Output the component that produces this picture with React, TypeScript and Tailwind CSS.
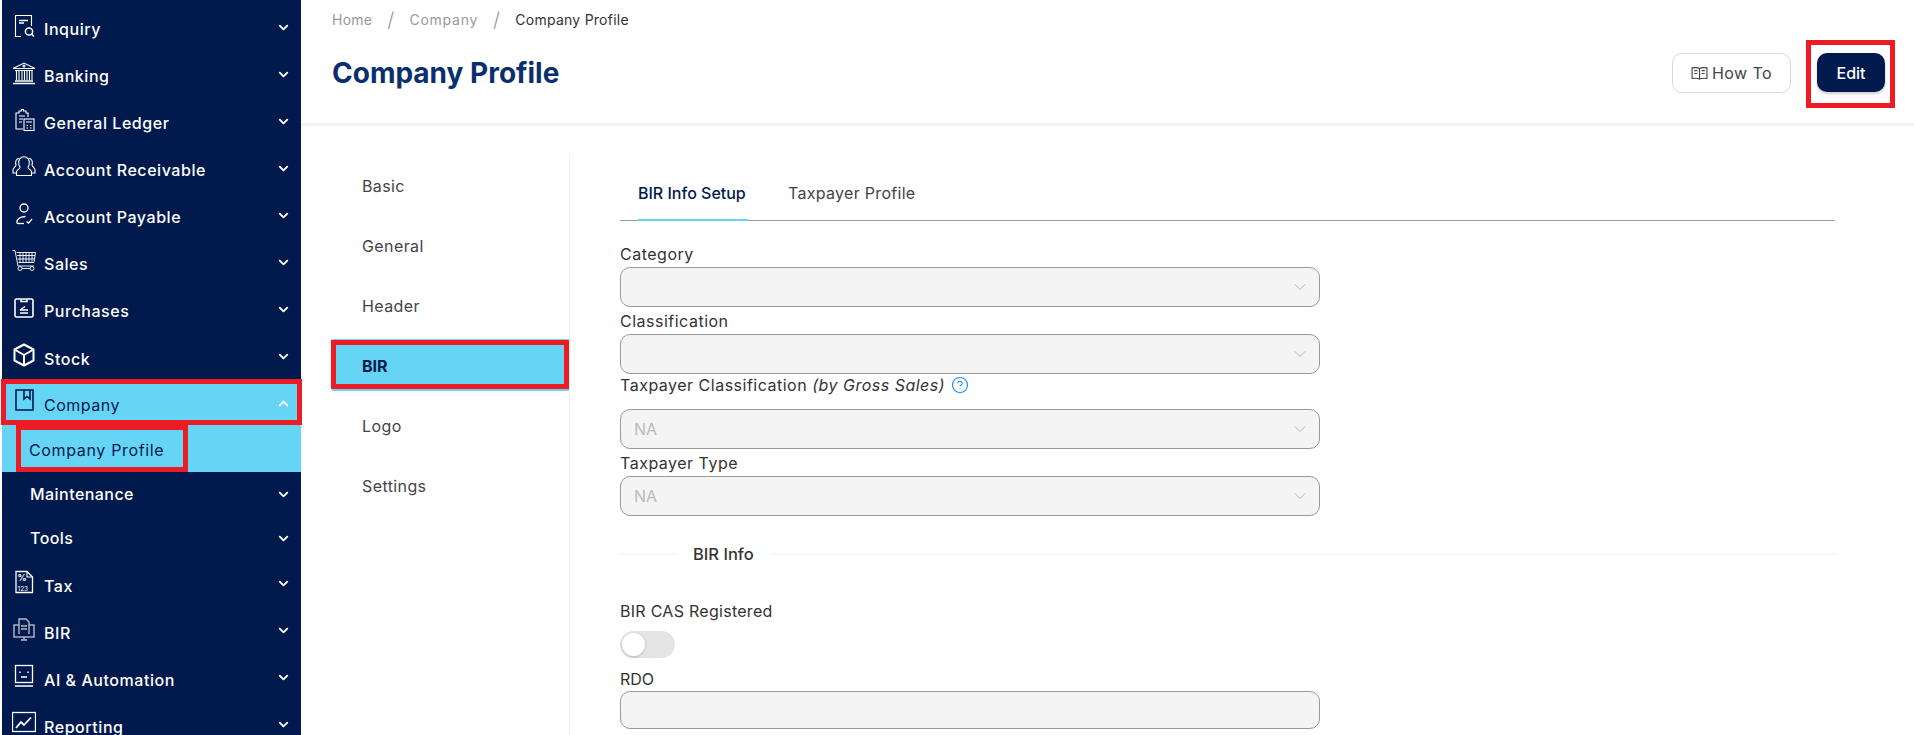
import { ChevronDown, ChevronUp, CircleHelp } from 'lucide-react'
import type { ReactNode } from 'react'

const ic = 'mb-[6px] h-6 w-6 shrink-0 fill-none stroke-current stroke-[1.1]'

const InquiryIcon = () => (
  <svg viewBox="0 0 24 24" className={ic}>
    <path d="M9 22.5H3.5V1.5H19.5V12" />
    <path d="M7 6.5H16M7 9H12" strokeWidth="1.5" />
    <circle cx="17" cy="17.5" r="3.6" strokeWidth="1.5" />
    <path d="M19.7 20.2L22 22.5" strokeWidth="1.5" />
  </svg>
)
const BankIcon = () => (
  <svg viewBox="0 0 24 24" className={ic}>
    <path d="M1 7.5L12 2L23 7.5H1Z" />
    <circle cx="12" cy="5" r="1" />
    <path d="M3 9.5H21M4.5 10V19M7 10V19M10 10V19M12.5 10V19M15 10V19M17.5 10V19M20 10V19" />
    <path d="M3 20H21M1 22.5H23" strokeWidth="1.5" />
  </svg>
)
const LedgerIcon = () => (
  <svg viewBox="0 0 24 24" className={ic}>
    <path d="M11 21H4V5H7V3H9.5V1.5H11.5V3H14V5H16V9" />
    <path d="M7 8H13M7 11H11M7 14H10" />
    <rect x="12" y="11" width="10" height="11.5" />
    <path d="M14 14H20M14.5 17.5H16M18 17.5H19.5M14.5 20H16M18 20H19.5" />
  </svg>
)
const ReceivableIcon = () => (
  <svg viewBox="0 0 24 24" className={ic}>
    <path d="M8 12C6 10 6 4 9.5 2.5C10.5 1.5 13.5 1.5 14.5 2.5C18 4 18 10 16 12C15.5 14 19 14.5 19.5 16.5V20.5H4.5V16.5C5 14.5 8.5 14 8 12Z" />
    <path d="M7 3.5C4 3.5 3 7 4 10C4 12 1 12.5 1 15V18H4.5" />
    <path d="M17 3.5C20 3.5 21 7 20 10C20 12 23 12.5 23 15V18H19.5" />
  </svg>
)
const PayableIcon = () => (
  <svg viewBox="0 0 24 24" className={ic}>
    <circle cx="12" cy="6" r="4" strokeWidth="1.3" />
    <path d="M5 21.5V20C5 16.5 9 14.5 13.5 14.5" strokeWidth="1.3" />
    <path d="M5 21.5H12" strokeWidth="1.3" />
    <path d="M14.5 19.5L16.5 21L20 17" strokeWidth="1.3" />
  </svg>
)
const CartIcon = () => (
  <svg viewBox="0 0 24 24" className={ic} style={{ strokeWidth: 0.9 }}>
    <path d="M0.5 1.5H3L6 17H22" />
    <path d="M4.5 3.5H23.5L22 13.5H6.5M8 3.5V13.5M11 3.5V13.5M14 3.5V13.5M17 3.5V13.5M20 3.5V13.5M5 6.5H23M5.5 10H22.5" />
    <circle cx="8" cy="19.5" r="2" />
    <circle cx="20" cy="19.5" r="2" />
    <path d="M10 19.5H18" />
  </svg>
)
const PurchasesIcon = () => (
  <svg viewBox="0 0 24 24" className={ic}>
    <rect x="3" y="3" width="18" height="18" rx="1.5" strokeWidth="1.6" />
    <path d="M9 3V5.5H15V3" strokeWidth="1.4" />
    <path d="M8 17H16M8 14H16M8 14L13 10.5" strokeWidth="1.4" />
  </svg>
)
const StockIcon = () => (
  <svg viewBox="0 0 24 24" className={ic} style={{ strokeWidth: 2, strokeLinejoin: 'round' }}>
    <path d="M12 1.5L21.5 6.5V17.5L12 22.5L2.5 17.5V6.5L12 1.5Z" />
    <path d="M2.5 6.5L12 12L21.5 6.5M12 12V22.5" />
  </svg>
)
const CompanyIcon = () => (
  <svg viewBox="0 0 24 24" className={ic} style={{ strokeWidth: 1.6 }}>
    <path d="M4 2H21V22H4V2Z" />
    <path d="M12 2V11L15 8.5L18 11V2" />
  </svg>
)
const TaxIcon = () => (
  <svg viewBox="0 0 24 24" className={ic}>
    <path d="M4 1.5H15L20.5 7V22.5H4V1.5Z" strokeWidth="1.3" />
    <path d="M15 1.5V7H20.5" />
    <text x="5.5" y="11" fontSize="9" fontWeight="700" fill="currentColor" stroke="none" fontFamily="Inter, sans-serif">%</text>
    <text x="5.5" y="20.5" fontSize="6.5" fill="currentColor" stroke="none" fontFamily="Inter, sans-serif">123</text>
  </svg>
)
const BirIcon = () => (
  <svg viewBox="0 0 24 24" className={ic} opacity="0.7">
    <rect x="2" y="8" width="20" height="12" strokeWidth="1.4" />
    <path d="M9 23H15M12 20V23" strokeWidth="1.4" />
    <path d="M7 17V2H14L17 5V17" fill="#001a4e" strokeWidth="1.4" />
    <path d="M9 9H15M9 12H15" strokeWidth="1.4" />
  </svg>
)
const AiIcon = () => (
  <svg viewBox="0 0 24 24" className={ic}>
    <rect x="3.5" y="1.5" width="17" height="17" strokeWidth="1.3" />
    <path d="M8 7.5V9M16 7.5V9M9 13H15M3 22H21" strokeWidth="1.4" />
  </svg>
)
const ReportingIcon = () => (
  <svg viewBox="0 0 24 24" className={ic}>
    <rect x="0.5" y="1.5" width="23" height="19" strokeWidth="1.3" />
    <path d="M4 17L9 11L12 14L19 6.5" strokeWidth="1.8" />
  </svg>
)

function RedBox({ className }: { className: string }) {
  return <span className={`pointer-events-none absolute border-[5px] border-[#ed1c24] ${className}`} />
}

function MenuRow({ icon, label, low = false }: { icon: ReactNode; label: string; low?: boolean }) {
  return (
    <div className="flex h-[47px] items-center pl-[10px] pr-[10px] text-white">
      <span className="flex w-[24px] shrink-0 justify-center">{icon}</span>
      <span className={`ml-[8px] flex-1 text-[16px] font-medium tracking-[0.55px] ${low ? 'pt-[2px]' : ''}`}>{label}</span>
      <ChevronDown className="mb-[3px] h-[15px] w-[15px]" strokeWidth={3} />
    </div>
  )
}

function SubRow({ label, className = 'h-[44px]' }: { label: string; className?: string }) {
  return (
    <div className={`flex items-center pl-[28px] pr-[10px] text-white ${className}`}>
      <span className="flex-1 text-[16px] font-medium tracking-[0.45px]">{label}</span>
      <ChevronDown className="h-[15px] w-[15px]" strokeWidth={3} />
    </div>
  )
}

function Sidebar() {
  return (
    <aside className="ml-[2px] w-[299px] shrink-0 bg-[#001a4e] pt-[5px]">
      <MenuRow icon={<InquiryIcon />} label="Inquiry" />
      <MenuRow icon={<BankIcon />} label="Banking" />
      <MenuRow icon={<LedgerIcon />} label="General Ledger" />
      <MenuRow icon={<ReceivableIcon />} label="Account Receivable" />
      <MenuRow icon={<PayableIcon />} label="Account Payable" />
      <MenuRow icon={<CartIcon />} label="Sales" />
      <MenuRow icon={<PurchasesIcon />} label="Purchases" />
      <MenuRow icon={<StockIcon />} label="Stock" low />
      <div className="relative flex h-[44px] items-center bg-[#66d5f5] pl-[10px] pr-[10px] text-[#001a4e]">
        <span className="flex w-[24px] shrink-0 justify-center">
          <CompanyIcon />
        </span>
        <span className="ml-[8px] flex-1 pt-[3px] text-[16px] tracking-[0.5px]">Company</span>
        <ChevronUp className="h-[15px] w-[15px] text-white" strokeWidth={3} />
        <RedBox className="-left-px -right-px -top-[2px] bottom-0" />
      </div>
      <div className="relative flex h-[47px] items-center bg-[#66d5f5] pl-[27px] pt-[3px] text-[16px] tracking-[0.65px] text-[#001a4e]">
        Company Profile
        <RedBox className="bottom-0 left-[14px] top-0 w-[172px]" />
      </div>
      <SubRow label="Maintenance" />
      <SubRow label="Tools" className="h-[45px] pb-[1px]" />
      <MenuRow icon={<TaxIcon />} label="Tax" low />
      <MenuRow icon={<BirIcon />} label="BIR" low />
      <MenuRow icon={<AiIcon />} label="AI & Automation" low />
      <MenuRow icon={<ReportingIcon />} label="Reporting" low />
    </aside>
  )
}

function SelectBox({ value }: { value?: string }) {
  return (
    <div className="flex h-[40px] w-[700px] items-center justify-between rounded-[10px] border border-[#999] bg-[#f4f4f4] pl-[13px] pr-[9px]">
      <span className="text-[16px] text-[#bbb]">{value}</span>
      <ChevronDown className="h-5 w-5 text-[#aaa]" strokeWidth={1} />
    </div>
  )
}

function Field({ label, value }: { label: string; value?: string }) {
  return (
    <div>
      <div className="flex h-[27px] items-center text-[16px] tracking-[0.5px] text-[#333]">{label}</div>
      <SelectBox value={value} />
    </div>
  )
}

function FormPanel() {
  return (
    <div className="ml-[50px] w-[1215px]">
      <div className="flex h-[66px] gap-[40px] border-b border-[#999] pl-[18px]">
        <div className="relative flex h-[66px] w-[110px] items-center whitespace-nowrap pt-[10px] text-[16px] font-medium text-[#001a4e]">
          BIR Info Setup
          <span className="absolute inset-x-0 bottom-0 h-[2px] bg-[#66d5f5]" />
        </div>
        <div className="flex h-[66px] items-center pt-[10px] text-[16px] tracking-[0.3px] text-[#444]">Taxpayer Profile</div>
      </div>
      <div className="pt-[19px]">
        <Field label="Category" />
        <Field label="Classification" />
        <div>
          <div className="flex h-[35px] items-start text-[16px] tracking-[0.5px] text-[#333]">
            <span className="-mt-[1px] flex h-[24px] items-center gap-[4px]">
              <span>
                Taxpayer Classification <em>(by Gross Sales)</em>
              </span>
              <CircleHelp className="ml-[2px] h-[18px] w-[18px] text-[#1a8cff]" strokeWidth={1.5} />
            </span>
          </div>
          <SelectBox value="NA" />
        </div>
        <Field label="Taxpayer Type" value="NA" />
        <div className="mt-[26px] flex h-[24px] items-center">
          <span className="h-px w-[55px] bg-[#f3f3f3]" />
          <span className="px-[18px] text-[16.5px] font-medium text-[#333]">BIR Info</span>
          <span className="h-px flex-1 bg-[#f3f3f3]" />
        </div>
        <div className="mt-[33px] flex h-[24px] items-center text-[16px] tracking-[0.28px] text-[#333]">BIR CAS Registered</div>
        <div className="relative mt-[8px] h-[27px] w-[55px] rounded-full bg-[#e4e4e4]">
          <span className="absolute left-[2px] top-[2px] h-[23px] w-[23px] rounded-full bg-white shadow-[0_1px_3px_rgba(0,0,0,0.2)]" />
        </div>
        <div className="mt-[8px] flex h-[25px] items-center text-[16px] text-[#333]">RDO</div>
        <div className="h-[38px] w-[700px] rounded-[10px] border border-[#999] bg-[#f4f4f4]" />
      </div>
    </div>
  )
}

const tabs = ['Basic', 'General', 'Header', 'BIR', 'Logo', 'Settings']

export default function App() {
  return (
    <div className="flex h-[735px] overflow-hidden bg-white font-['Inter',sans-serif]">
      <Sidebar />
      <main className="flex-1">
        <header className="flex h-[126px] items-start justify-between border-b-[3px] border-[#f3f3f3] pl-[31px] pr-[29px]">
          <div>
            <nav className="flex h-[39px] items-center text-[14px] tracking-[0.25px] text-[#999]">
              <span>Home</span>
              <span className="mx-[15px] text-[20px] font-light">/</span>
              <span className="tracking-[0.75px]">Company</span>
              <span className="mx-[15px] text-[20px] font-light">/</span>
              <span className="text-[#333]">Company Profile</span>
            </nav>
            <h1 className="mt-[17px] text-[28px] font-bold leading-[34px] text-[#0a2f6e]">Company Profile</h1>
          </div>
          <div className="mt-[53px] flex items-start gap-[26px]">
            <button className="flex h-[40px] w-[119px] items-center justify-center gap-[4px] rounded-[10px] border border-[#d9d9d9] text-[16px] tracking-[0.4px] text-[#444]">
              <svg viewBox="0 0 24 24" className="h-[17px] w-[17px] fill-none stroke-current stroke-[1.6]">
                <path d="M12 5C10 3.5 5 3.5 1.5 4V19C5 18.5 10 18.5 12 20C14 18.5 19 18.5 22.5 19V4C19 3.5 14 3.5 12 5ZM12 5V20" />
                <path d="M4.5 8H9M4.5 12H9M15 8H19.5M15 12H19.5" />
              </svg>
              How To
            </button>
            <button className="relative h-[39px] w-[68px] rounded-[10px] bg-[#001a4e] text-[16px] font-medium text-white shadow-[0_2px_3px_rgba(0,0,0,0.2)]">
              Edit
              <RedBox className="-bottom-[16px] -left-[11px] -right-[10px] -top-[13px]" />
            </button>
          </div>
        </header>
        <div className="flex h-[609px] pl-[31px] pt-[29px]">
          <div className="w-[238px] shrink-0 border-r border-[#eee] pt-[4px]">
            <div className="flex flex-col gap-[8px]">
              {tabs.map((tab) =>
                tab === 'BIR' ? (
                  <div key={tab} className="relative flex h-[52px] items-center bg-[#66d5f5] pl-[30px] pt-[1px] text-[16px] font-bold text-[#001a4e]">
                    {tab}
                    <RedBox className="-left-px right-0 top-px bottom-[2px]" />
                  </div>
                ) : (
                  <div key={tab} className="flex h-[52px] items-center pl-[30px] pt-[1px] text-[16px] tracking-[0.4px] text-[#444]">
                    {tab}
                  </div>
                ),
              )}
            </div>
          </div>
          <FormPanel />
        </div>
      </main>
    </div>
  )
}
